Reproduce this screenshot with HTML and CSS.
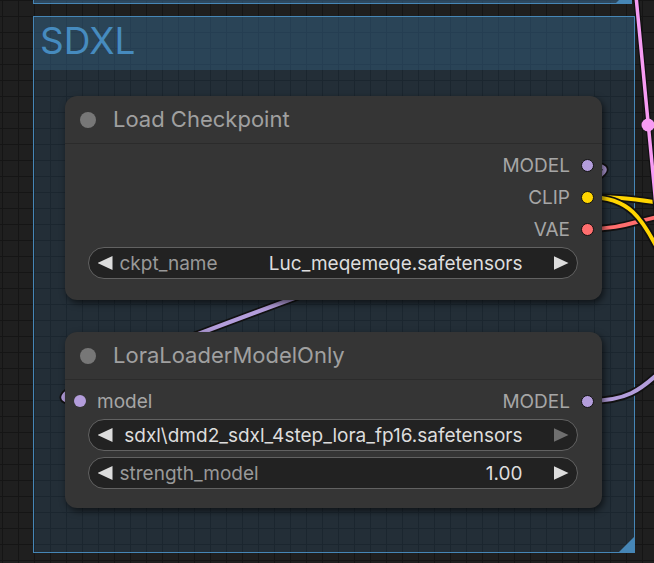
FILE: index.html
```html
<!DOCTYPE html>
<html>
<head>
<meta charset="utf-8">
<link rel="stylesheet" href="styles.css">
</head>
<body>
<div class="canvas">
  <div class="group group-top"><div class="corner"></div></div>
  <div class="group group-sdxl">
    <div class="group-title">SDXL</div>
    <div class="corner"></div>
  </div>

  <svg class="links" width="654" height="563" viewBox="0 0 654 563">
    <g fill="none" stroke-linecap="round">
      <path d="M588,165 C728,165 -60,402 80,402" stroke="#111" stroke-width="7.5"/>
      <path d="M588,165 C728,165 -60,402 80,402" stroke="#b39ddb" stroke-width="4"/>
      <path d="M588,229 C620,229 632,222 662,216" stroke="#111" stroke-width="7.5"/>
      <path d="M588,229 C620,229 632,222 662,216" stroke="#ff6e6e" stroke-width="4"/>
      <path d="M588,197 C620,197 632,199 662,203" stroke="#111" stroke-width="7.5"/>
      <path d="M588,197 C620,197 632,199 662,203" stroke="#ffd500" stroke-width="4"/>
      <path d="M588,197 C628,197 642,215 664,262" stroke="#111" stroke-width="7.5"/>
      <path d="M588,197 C628,197 642,215 664,262" stroke="#ffd500" stroke-width="4"/>
      <path d="M588,401 C625,401 640,392 666,366" stroke="#111" stroke-width="7.5"/>
      <path d="M588,401 C625,401 640,392 666,366" stroke="#b39ddb" stroke-width="4"/>
      <path d="M636,-4 L657,216" stroke="#111" stroke-width="6"/>
      <path d="M636,-4 L657,216" stroke="#f79cf3" stroke-width="3.5"/>
    </g>
    <circle cx="648" cy="125" r="6.5" fill="#f79cf3"/>
  </svg>

  <div class="node node-ckpt">
    <div class="node-title"><span class="title-dot"></span><span class="title-text">Load Checkpoint</span></div>
    <div class="node-body body-ckpt">
      <div class="slot-row"><span class="slot-label">MODEL</span><span class="dot dot-model"></span></div>
      <div class="slot-row"><span class="slot-label">CLIP</span><span class="dot dot-clip"></span></div>
      <div class="slot-row"><span class="slot-label">VAE</span><span class="dot dot-vae"></span></div>
      <div class="widget">
        <span class="arrow arrow-left"></span>
        <span class="w-label">ckpt_name</span>
        <span class="w-value">Luc_meqemeqe.safetensors</span>
        <span class="arrow arrow-right"></span>
      </div>
    </div>
  </div>

  <div class="node node-lora">
    <div class="node-title"><span class="title-dot"></span><span class="title-text">LoraLoaderModelOnly</span></div>
    <div class="node-body body-lora">
      <div class="slot-row slot-both">
        <span class="in-dot"></span><span class="slot-label in-label">model</span>
        <span class="spacer"></span>
        <span class="slot-label">MODEL</span><span class="dot dot-model"></span>
      </div>
      <div class="widget">
        <span class="arrow arrow-left"></span>
        <span class="w-value w-long">sdxl\dmd2_sdxl_4step_lora_fp16.safetensors</span>
        <span class="arrow arrow-right arrow-dim"></span>
      </div>
      <div class="widget">
        <span class="arrow arrow-left"></span>
        <span class="w-label">strength_model</span>
        <span class="w-value">1.00</span>
        <span class="arrow arrow-right"></span>
      </div>
    </div>
  </div>
</div>
</body>
</html>
```

FILE: styles.css
```css
* { box-sizing: border-box; }
html, body { margin: 0; padding: 0; background: #1f1f1f; }
body { font-family: "Inter", "Noto Sans", sans-serif; }

.canvas {
  position: relative;
  width: 654px;
  height: 563px;
  overflow: hidden;
  background-color: #1f1f1f;
  background-image:
    linear-gradient(to right, #151515 1.5px, transparent 1.5px),
    linear-gradient(to bottom, #151515 1.5px, transparent 1.5px);
  background-size: 16px 16px;
  background-position: 2px 0, 0 0;
}

.group {
  position: absolute;
  border: 1.5px solid #4686b6;
}
.group-top {
  left: 33px;
  top: -30px;
  width: 599px;
  height: 34px;
  background: rgba(58, 108, 150, 0.55);
}
.group-sdxl {
  left: 33px;
  top: 16px;
  width: 602px;
  height: 537px;
  background: rgba(52, 101, 142, 0.22);
}
.group-title {
  height: 53px;
  padding-left: 6px;
  font-size: 37px;
  line-height: 48px;
  color: #468bbf;
  background: rgba(58, 108, 150, 0.35);
}
.corner {
  position: absolute;
  right: 0;
  bottom: 0;
  width: 15px;
  height: 15px;
  background: #4686b6;
  clip-path: polygon(100% 0, 100% 100%, 0 100%);
}

.links {
  position: absolute;
  left: 0;
  top: 0;
}

.node {
  position: absolute;
  left: 65px;
  width: 537px;
  background: #353535;
  border-radius: 12px;
  box-shadow: 2px 3px 7px rgba(0, 0, 0, 0.6);
}
.node-ckpt { top: 96px; height: 204px; }
.node-lora { top: 332px; height: 176px; }

.node-title {
  height: 48px;
  display: flex;
  align-items: center;
  padding-left: 15px;
  border-bottom: 1px solid #2b2b2b;
}
.title-dot {
  width: 16px;
  height: 16px;
  border-radius: 50%;
  background: #777777;
  margin-right: 17px;
}
.title-text {
  font-size: 22px;
  line-height: 47px;
  color: #a0a0a0;
}

.node-body {
  display: flex;
  flex-direction: column;
  padding-top: 5px;
}

.slot-row {
  height: 32px;
  display: flex;
  align-items: center;
  justify-content: flex-end;
  padding-right: 8px;
}
.slot-both { padding-left: 9px; justify-content: flex-start; }
.spacer { flex: 1; }
.slot-label {
  font-size: 19px;
  color: #a6a6a6;
}
.in-label { margin-left: 11px; }
.dot {
  width: 13px;
  height: 13px;
  border-radius: 50%;
  border: 1.5px solid #111;
  margin-left: 11px;
}
.dot-model { background: #b39ddb; }
.dot-clip { background: #ffd500; }
.dot-vae { background: #ff6e6e; }
.in-dot {
  width: 12px;
  height: 12px;
  border-radius: 50%;
  background: #b39ddb;
}

.widget {
  margin: 2px 24px 0 23px;
  height: 32px;
  display: flex;
  align-items: center;
  padding: 0 8.5px;
  background: #222222;
  border: 1.5px solid #626262;
  border-radius: 16px;
  font-size: 19px;
}
.body-lora .widget + .widget { margin-top: 6px; }
.arrow {
  width: 15px;
  height: 14px;
  background: #dddddd;
  flex: none;
}
.arrow-left { clip-path: polygon(0 50%, 100% 0, 100% 100%); margin-right: 7px; }
.arrow-right { clip-path: polygon(0 0, 100% 50%, 0 100%); }
.arrow-dim { background: #6f6f6f; }
.w-label { flex: 1; color: #999999; }
.w-value { color: #dddddd; margin-right: 31px; white-space: nowrap; }
.w-long { margin-left: auto; }
```
